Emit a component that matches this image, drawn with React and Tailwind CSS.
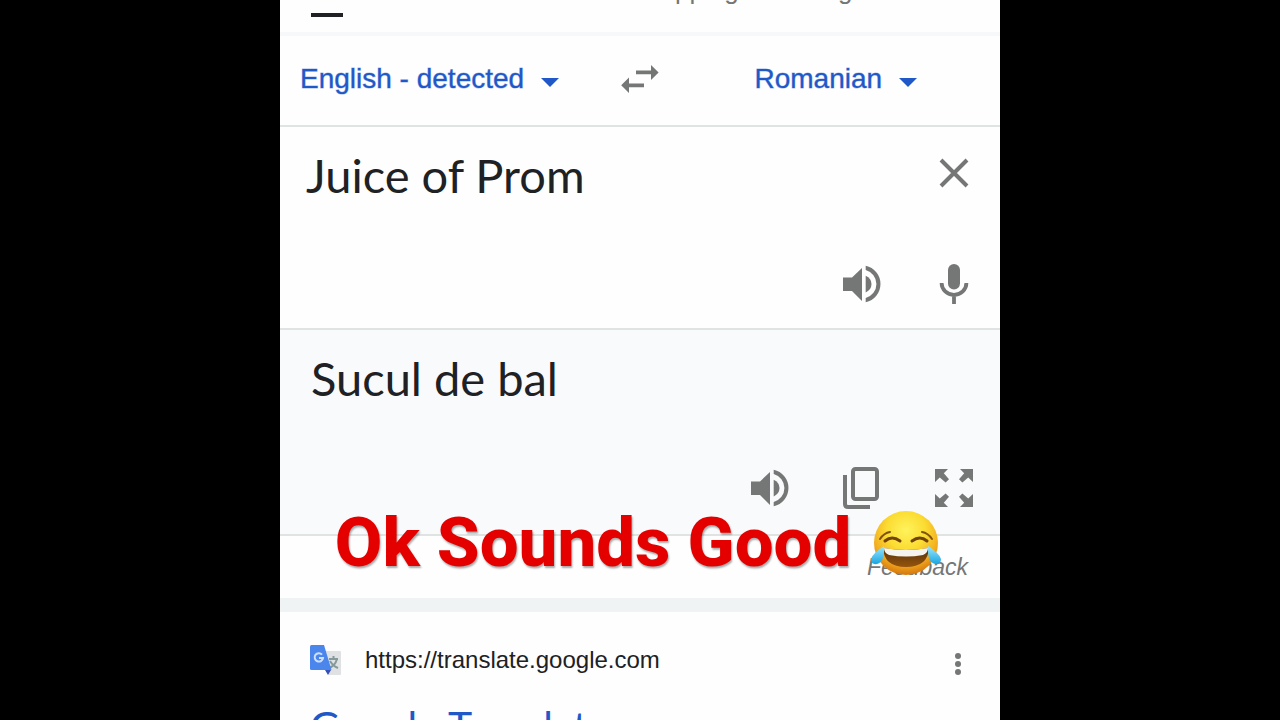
import React from "react";

const SpeakerIcon = () => (
  <svg className="h-[38px] w-[38px]" viewBox="0 0 38 38" fill="currentColor" aria-hidden="true">
    <path d="M0 12.5H9L19 3V36L9 26H0Z"/>
    <path d="M22.7 10.8Q28.5 13.5 28.5 19Q28.5 24.5 22.7 27.5Z"/>
    <path d="M22.7 .8A18.6 18.6 0 0 1 22.7 37.2V33A14.5 14.5 0 0 0 22.7 5Z"/>
  </svg>
);

const MicIcon = () => (
  <svg className="h-10 w-[30px]" viewBox="0 0 30 40" aria-hidden="true">
    <rect x="9" y="0" width="12" height="25.5" rx="6" fill="currentColor"/>
    <path d="M2.6 19A12.4 11.8 0 0 0 27.4 19M15 31V40" fill="none" stroke="currentColor" strokeWidth="3.8"/>
  </svg>
);

const CloseIcon = () => (
  <svg className="h-[30px] w-[30px]" viewBox="0 0 30 30" aria-hidden="true">
    <path d="M2 2L28 28M28 2L2 28" fill="none" stroke="currentColor" strokeWidth="4"/>
  </svg>
);

const CopyIcon = () => (
  <svg className="h-[42px] w-[38px]" viewBox="0 0 38 42" fill="none" stroke="currentColor" strokeWidth="4" aria-hidden="true">
    <rect x="10" y="2" width="24" height="30" rx="2.5"/>
    <path d="M2 8V37Q2 40 5 40H27"/>
  </svg>
);

const ExpandIcon = () => (
  <svg className="h-[38px] w-[38px]" viewBox="0 0 38 38" fill="currentColor" aria-hidden="true">
    <path d="M0 0H13L8.8 4.2L14 10.2L10.6 13.6L4.8 8.6L0 13Z"/>
    <path d="M38 0H25L29.2 4.2L24 10.2L27.4 13.6L33.2 8.6L38 13Z"/>
    <path d="M0 38H13L8.8 33.8L14 27.8L10.6 24.4L4.8 29.4L0 25Z"/>
    <path d="M38 38H25L29.2 33.8L24 27.8L27.4 24.4L33.2 29.4L38 25Z"/>
  </svg>
);

const SwapIcon = () => (
  <svg className="h-7 w-[38px]" viewBox="0 0 38 28" fill="currentColor" aria-hidden="true">
    <path d="M15 5.4H30V0L37.6 7.5L30 15V9.2H15Z"/>
    <path d="M23 18.5H8V12.5L.2 20.2L8 28V22.3H23Z"/>
  </svg>
);

const Caret = () => (
  <svg className="pointer-events-none mt-2 h-[9px] w-[18px]" viewBox="0 0 18 9" fill="currentColor" aria-hidden="true">
    <path d="M0 0H18L9 9Z"/>
  </svg>
);

const TranslateLogo = () => (
  <svg className="h-[31px] w-[31px]" viewBox="0 0 31 31" aria-hidden="true">
    <path d="M12 6H30Q31 6 31 7V29Q31 30 30 30H19Z" fill="#dfe1e2"/>
    <path d="M19 14H28M23.5 11V14M27 14Q25 21 19 23M20 16Q23 21 28 23" fill="none" stroke="#83999b" strokeWidth="2"/>
    <path d="M15 25H21L18 30Z" fill="#354fb5"/>
    <path d="M1.5 0H14L21.5 25H1.5Q0 25 0 23.5V1.5Q0 0 1.5 0Z" fill="#4b86ec"/>
    <path d="M12 9.6A4.2 4.2 0 1 0 13 13H9" fill="none" stroke="#cfe0ff" strokeWidth="2"/>
  </svg>
);

const JoyEmoji = () => (
  <svg className="h-[66px] w-[70px]" viewBox="0 0 70 66" role="img" aria-label="Face with tears of joy">
    <defs>
      <radialGradient id="face" cx="50%" cy="30%" r="68%">
        <stop offset="0" stopColor="#fff35c"/>
        <stop offset=".45" stopColor="#fbdc32"/>
        <stop offset=".78" stopColor="#f3ae20"/>
        <stop offset="1" stopColor="#d97c10"/>
      </radialGradient>
      <linearGradient id="mouth" x1="0" y1="0" x2="0" y2="1">
        <stop offset="0" stopColor="#58300a"/>
        <stop offset="1" stopColor="#94550d"/>
      </linearGradient>
      <linearGradient id="tear" x1="0" y1="0" x2="0" y2="1">
        <stop offset="0" stopColor="#9ee8fb"/>
        <stop offset="1" stopColor="#18a5e3"/>
      </linearGradient>
    </defs>
    <circle cx="35" cy="33" r="32" fill="url(#face)"/>
    <path d="M9 29Q13 23 19 22M51 22Q57 23 61 29" fill="none" stroke="#80510b" strokeWidth="2" strokeLinecap="round"/>
    <path d="M14 31Q21 25 29 31M41 31Q49 25 56 31" fill="none" stroke="#724308" strokeWidth="3" strokeLinecap="round"/>
    <path d="M12 38Q35 42 58 38Q57 57 35 57Q13 57 12 38Z" fill="url(#mouth)"/>
    <path d="M13 38Q35 42 57 38Q57 43 52 45Q35 48 18 45Q13 43 13 38Z" fill="#f6f4ee"/>
    <path d="M13 36Q14 52 6 54Q0 55 0 49Q1 44 13 36Z" fill="url(#tear)"/>
    <path d="M57 36Q56 52 64 54Q70 55 70 49Q69 44 57 36Z" fill="url(#tear)"/>
  </svg>
);

const LanguageSelect = ({id, label, value}) => (
  <div className="flex items-center gap-4 text-[#2158c8]">
    <label htmlFor={id} className="sr-only">{label}</label>
    <select
      id={id}
      defaultValue={value}
      className="appearance-none bg-transparent text-[28px] leading-8 outline-none [-webkit-text-stroke:1px_#2158c866]"
    >
      <option>{value}</option>
    </select>
    <Caret/>
  </div>
);

const IconButton = ({label, children}) => (
  <button type="button" aria-label={label} className="flex h-11 w-11 items-center justify-center">
    {children}
  </button>
);

const App = () => {
  return (
    <div className="flex h-screen justify-center overflow-hidden bg-black font-['Liberation_Sans',Arial,sans-serif]">
      <main className="relative w-full max-w-[720px] overflow-hidden bg-[#fdfefd] text-[#747775]">
        <nav className="flex h-9 items-start justify-between overflow-hidden border-b-4 border-[#f7f8f9] pr-30 pl-[31px] text-[26px] leading-8">
          <a href="#all" className="-mt-8 h-[49px] w-8 border-b-4 border-[#202124] text-[#202124]">All</a>
          <div className="-mt-[26px] flex gap-14">
            <a href="#shopping">Shopping</a>
            <a href="#images">Images</a>
          </div>
        </nav>

        <div className="grid h-[91px] grid-cols-[1fr_auto_1fr] items-center border-b-2 border-[#dfe3e2] pb-1">
          <div className="pl-5">
            <LanguageSelect id="from" label="Source language" value="English - detected"/>
          </div>
          <button type="button" aria-label="Swap languages"><SwapIcon/></button>
          <div className="flex justify-center pl-3">
            <LanguageSelect id="to" label="Target language" value="Romanian"/>
          </div>
        </div>

        <section className="flex h-[203px] flex-col justify-between border-b-2 border-[#dfe3e2] pt-6 pr-6 pb-[22px] pl-[26px]">
          <div className="flex items-start justify-between">
            <textarea
              aria-label="Source text"
              rows={1}
              defaultValue="Juice of Prom"
              className="min-w-0 flex-1 resize-none overflow-hidden font-['Lato',sans-serif] text-[47px] leading-[48px] text-[#202124] outline-none"
            />
            <IconButton label="Clear text"><CloseIcon/></IconButton>
          </div>
          <div className="flex justify-end gap-12">
            <IconButton label="Listen to source"><SpeakerIcon/></IconButton>
            <IconButton label="Speak"><MicIcon/></IconButton>
          </div>
        </section>

        <section className="flex h-[206px] flex-col justify-between border-b-2 border-[#dfe3e2] bg-[#f8fafb] pt-6 pr-6 pb-6 pl-[31px]">
          <p className="font-['Lato',sans-serif] text-[47px] leading-[48px] text-[#202124]">Sucul de bal</p>
          <div className="flex justify-end gap-12">
            <IconButton label="Listen to translation"><SpeakerIcon/></IconButton>
            <IconButton label="Copy"><CopyIcon/></IconButton>
            <IconButton label="Full screen"><ExpandIcon/></IconButton>
          </div>
        </section>

        <div className="flex h-[62px] items-center justify-end pr-8">
          <a href="#feedback" className="text-[23px] leading-7 italic">Feedback</a>
        </div>
        <div className="h-[14px] bg-[#f0f3f3]"/>

        <article className="px-[30px] pt-8">
          <div className="flex items-center">
            <TranslateLogo/>
            <cite className="ml-6 flex-1 text-[24px] leading-7 text-[#202124] not-italic">https://translate.google.com</cite>
            <button type="button" aria-label="More about this result" className="mt-2">
              <svg className="h-6 w-6" viewBox="0 0 24 24" fill="currentColor" aria-hidden="true">
                <circle cx="12" cy="4" r="3"/>
                <circle cx="12" cy="12" r="3"/>
                <circle cx="12" cy="20" r="3"/>
              </svg>
            </button>
          </div>
          <h3 className="mt-6 font-['Lato',sans-serif] text-[41px] leading-[52px] text-[#2158c8]">
            <a href="#result">Google Translate</a>
          </h3>
        </article>

        {/* caption over the page */}
        <div className="absolute inset-x-0 top-[503px] flex items-center justify-center gap-5 pr-1">
          <p className="font-['Roboto',sans-serif] text-[69px] leading-[80px] font-extrabold whitespace-nowrap text-[#e50000] [text-shadow:1px_2px_2px_#0005]">
            Ok Sounds Good
          </p>
          <JoyEmoji/>
        </div>
      </main>
    </div>
  );
}

export default App;
